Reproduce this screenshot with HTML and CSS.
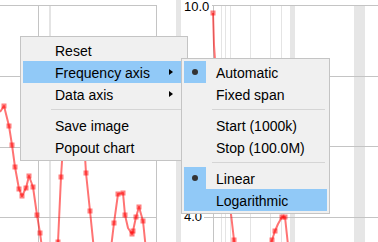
FILE: index.html
```html
<!DOCTYPE html>
<html lang="en">
<head>
    <meta charset="UTF-8">
    <meta name="viewport" content="width=device-width, initial-scale=1.0">
    <link rel="stylesheet" href="styles.css">
    <title>Spectrum - chart menu</title>
</head>
<body>
    <div class="chart-area">
        <svg class="plot" width="378" height="242" viewBox="0 0 378 242">
            <!-- left chart grid -->
            <rect x="49" y="5" width="2" height="237" fill="#e4e4e4"/>
            <path d="M0 5.5H157M0 76.5H157M0 147.5H157M0 217.5H157M38.5 5V242M156.5 5V242" stroke="#c4c4c4"/>
            <rect x="176" y="0" width="5" height="242" fill="#e6e6e6"/>
            <!-- right chart grid -->
            <path d="M221.5 5V242M225.5 5V242M230.5 5V242M250.5 5V242M270.5 5V242M281.5 5V242" stroke="#e4e4e4"/>
            <rect x="290" y="5" width="5" height="237" fill="#e6e6e6"/>
            <rect x="354" y="5" width="11" height="237" fill="#e6e6e6"/>
            <path d="M212 5.5H378M204 76.5H378M204 146.5H378M204 217.5H378M213.5 5V242" stroke="#c4c4c4"/>
            <text class="axis-label" x="184" y="10.5">10.0</text>
            <text class="axis-label" x="184" y="221">4.0</text>

            <!-- data traces -->
            <polyline class="trace" points="0,112 4,106 9,126 12,145 15,167 19,189 22,196 26,188 29,176 33,187 37,215 40,233 44,262 50,275 56,258 58,242 61,177 64,130 70,100 78,110 84,140 86,173 90,211 94,250 104,268 111,248 114,223 118,194 123,193 125,215 128,228 132,234 133,231 136,217 139,207 143,221 146,250"/>
            <polyline class="trace" points="213,13 214,45 215,60 220,120 226,170 231,214 234,240 236,262 268,262 272,240 275,231 278,224 282,217 285,217 288,245"/>
            <g class="markers">
                <rect x="1.5" y="103.5" width="5" height="5"/>
                <rect x="6.5" y="123.5" width="5" height="5"/>
                <rect x="9.5" y="142.5" width="5" height="5"/>
                <rect x="12.5" y="164.5" width="5" height="5"/>
                <rect x="16.5" y="186.5" width="5" height="5"/>
                <rect x="19.5" y="193.5" width="5" height="5"/>
                <rect x="23.5" y="185.5" width="5" height="5"/>
                <rect x="26.5" y="173.5" width="5" height="5"/>
                <rect x="30.5" y="184.5" width="5" height="5"/>
                <rect x="34.5" y="212.5" width="5" height="5"/>
                <rect x="37.5" y="230.5" width="5" height="5"/>
                <rect x="55.5" y="239.5" width="5" height="5"/>
                <rect x="58.5" y="174.5" width="5" height="5"/>
                <rect x="83.5" y="170.5" width="5" height="5"/>
                <rect x="87.5" y="208.5" width="5" height="5"/>
                <rect x="111.5" y="220.5" width="5" height="5"/>
                <rect x="115.5" y="191.5" width="5" height="5"/>
                <rect x="120.5" y="190.5" width="5" height="5"/>
                <rect x="122.5" y="212.5" width="5" height="5"/>
                <rect x="129.5" y="231.5" width="5" height="5"/>
                <rect x="130.5" y="228.5" width="5" height="5"/>
                <rect x="133.5" y="214.5" width="5" height="5"/>
                <rect x="136.5" y="204.5" width="5" height="5"/>
                <rect x="140.5" y="218.5" width="5" height="5"/>
                <rect x="210.5" y="10.5" width="5" height="5"/>
                <rect x="231.5" y="237.5" width="5" height="5"/>
                <rect x="269.5" y="237.5" width="5" height="5"/>
                <rect x="272.5" y="228.5" width="5" height="5"/>
                <rect x="279.5" y="214.5" width="5" height="5"/>
                <rect x="282.5" y="214.5" width="5" height="5"/>
            </g>
        </svg>

        <div class="menu main-menu">
            <div class="menu-item">Reset</div>
            <div class="menu-item selected">Frequency axis<span class="arrow"></span></div>
            <div class="menu-item">Data axis<span class="arrow"></span></div>
            <div class="menu-sep"></div>
            <div class="menu-item">Save image</div>
            <div class="menu-item">Popout chart</div>
        </div>

        <div class="menu sub-menu">
            <div class="menu-item"><span class="check"></span>Automatic</div>
            <div class="menu-item">Fixed span</div>
            <div class="menu-sep"></div>
            <div class="menu-item">Start (1000k)</div>
            <div class="menu-item">Stop (100.0M)</div>
            <div class="menu-sep"></div>
            <div class="menu-item"><span class="check"></span>Linear</div>
            <div class="menu-item selected">Logarithmic</div>
        </div>
    </div>
</body>
</html>
```

FILE: styles.css
```css
body {
    margin: 0;
    padding: 0;
    background-color: #fff;
    font-family: "Liberation Sans", Arial, sans-serif;
    color: #000;
}
.chart-area {
    position: relative;
    width: 378px;
    height: 242px;
    overflow: hidden;
}
.plot {
    display: block;
}
.axis-label {
    font-family: "Liberation Sans", Arial, sans-serif;
    font-size: 13px;
    fill: #000;
}
.trace {
    fill: none;
    stroke: rgba(255, 0, 0, 0.55);
    stroke-width: 2;
    stroke-linejoin: round;
}
.markers rect {
    fill: rgba(255, 0, 0, 0.5);
}

/* context menu */
.menu {
    position: absolute;
    background-color: #f0f0f0;
    border: 1px solid #c4c4c4;
    padding: 2px;
    font-size: 14px;
}
.main-menu {
    left: 20px;
    top: 36px;
    width: 162px;
}
.sub-menu {
    left: 181px;
    top: 58px;
    width: 143px;
}
.menu-item {
    position: relative;
    height: 22px;
    box-sizing: border-box;
    padding: 3px 0 0 32px;
    line-height: 19px;
    white-space: nowrap;
}
.menu-item.selected {
    background-color: #91c9f7;
}
.menu-sep {
    height: 9px;
    margin: 0 2px 0 28px;
    background: linear-gradient(#d5d5d5, #d5d5d5) no-repeat 0 4px / 100% 1px;
}
.arrow {
    position: absolute;
    right: 12px;
    top: 8px;
    width: 0;
    height: 0;
    border-left: 4px solid #000;
    border-top: 3.5px solid transparent;
    border-bottom: 3.5px solid transparent;
}
.check {
    position: absolute;
    left: 0;
    top: 0;
    width: 22px;
    height: 22px;
    background-color: #91c9f7;
}
.check::after {
    content: "";
    position: absolute;
    left: 8px;
    top: 8px;
    width: 6px;
    height: 6px;
    border-radius: 50%;
    background-color: #333;
}
```
